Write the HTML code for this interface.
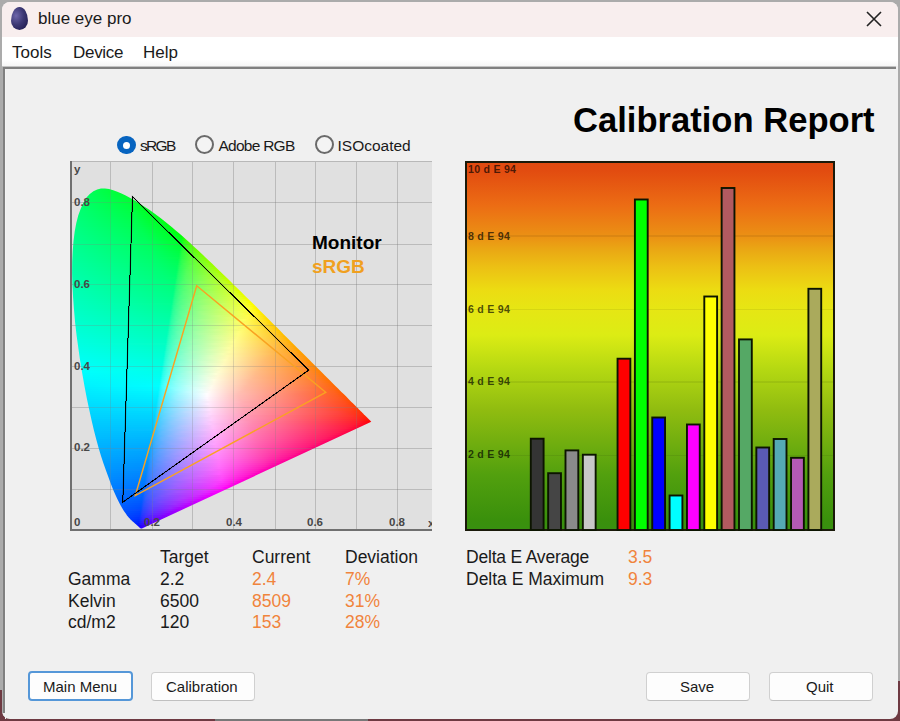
<!DOCTYPE html><html><head><meta charset="utf-8"><style>
*{margin:0;padding:0;box-sizing:border-box}
html,body{width:900px;height:721px;overflow:hidden;background:#ababab;font-family:"Liberation Sans",sans-serif}
.a{position:absolute}
.t{position:absolute;white-space:nowrap;line-height:1}
#win{position:absolute;left:2px;top:2px;width:896px;height:717px;background:#f0f0f0;border-radius:8px;overflow:hidden}
#field i{position:absolute;display:block;height:2px}
.btn{position:absolute;background:#fdfdfd;border:1px solid #d0d0d0;border-bottom-color:#c0c0c0;border-radius:4px}
</style></head><body>
<div class="a" style="left:0;top:690px;width:3px;height:31px;background:#6e3a42"></div><div class="a" style="left:895px;top:681px;width:5px;height:40px;background:#6e3a42"></div><div class="a" style="left:0;top:716px;width:900px;height:5px;background:linear-gradient(90deg,#6e3a42 0,#6e3a42 215px,#787878 215px,#787878 368px,#6e3a42 368px)"></div>
<div id="win"></div>

<div class="a" style="left:2px;top:2px;width:896px;height:35px;background:#f8eeee;border-radius:8px 8px 0 0"></div>
<div class="a" style="left:11px;top:7px;width:17px;height:23px;border-radius:50% 50% 50% 50%/60% 60% 40% 40%;background:radial-gradient(ellipse at 30% 38%,#6e66aa 0%,#3c3874 45%,#28245a 75%,#18163a 100%)"></div>
<div class="t" style="left:38px;top:10px;font-size:17px;color:#1a1a1a">blue eye pro</div>
<svg class="a" style="left:864px;top:9px" width="20" height="20"><path d="M3 3L17 17M17 3L3 17" stroke="#222" stroke-width="1.6"/></svg>
<div class="a" style="left:2px;top:37px;width:896px;height:29px;background:linear-gradient(180deg,#fff 0,#fff 23px,#f6f6f6 29px)"></div>
<div class="t" style="left:12px;top:43.5px;font-size:17px;color:#1a1a1a">Tools</div>
<div class="t" style="left:73px;top:43.5px;font-size:17px;color:#1a1a1a;letter-spacing:-0.3px">Device</div>
<div class="t" style="left:143px;top:43.5px;font-size:17px;color:#1a1a1a">Help</div>
<div class="a" style="left:2px;top:66px;width:894px;height:1px;background:#c4c4c4"></div>
<div class="a" style="left:3px;top:67px;width:893px;height:2px;background:#808080"></div>
<div class="a" style="left:3px;top:67px;width:2px;height:646px;background:#808080"></div>
<div class="a" style="left:2px;top:67px;width:1px;height:646px;background:#acacac"></div>
<div class="a" style="left:5px;top:69px;width:1px;height:650px;background:#f4f4f4"></div>
<div class="t" style="left:573px;top:102.5px;font-size:34.6px;font-weight:bold;color:#000">Calibration Report</div>
<div class="a" style="left:117.2px;top:135.7px;width:18.8px;height:18.8px;border-radius:50%;background:#0764c0"></div>
<div class="a" style="left:122.9px;top:141.5px;width:7.3px;height:7.3px;border-radius:50%;background:#fff"></div>
<div class="t" style="left:140px;top:138px;font-size:15.5px;color:#1a1a1a;letter-spacing:-1.7px">sRGB</div>
<div class="a" style="left:195px;top:135.4px;width:19px;height:19px;border-radius:50%;border:2px solid #6a6a6a;background:#f4f4f4"></div>
<div class="t" style="left:218.5px;top:138px;font-size:15.5px;color:#1a1a1a;letter-spacing:-0.75px">Adobe RGB</div>
<div class="a" style="left:315.3px;top:135.4px;width:19px;height:19px;border-radius:50%;border:2px solid #6a6a6a;background:#f4f4f4"></div>
<div class="t" style="left:337.5px;top:138px;font-size:15.5px;color:#1a1a1a;letter-spacing:0px">ISOcoated</div>
<div class="a" style="left:70px;top:161px;width:362px;height:370px;background:#e0e0e0"></div>
<div class="a" style="left:110px;top:161px;width:1px;height:368px;background:rgba(0,0,0,0.07)"></div>
<div class="a" style="left:152px;top:161px;width:1px;height:368px;background:rgba(0,0,0,0.07)"></div>
<div class="a" style="left:192px;top:161px;width:1px;height:368px;background:rgba(0,0,0,0.07)"></div>
<div class="a" style="left:233px;top:161px;width:1px;height:368px;background:rgba(0,0,0,0.07)"></div>
<div class="a" style="left:275px;top:161px;width:1px;height:368px;background:rgba(0,0,0,0.07)"></div>
<div class="a" style="left:315px;top:161px;width:1px;height:368px;background:rgba(0,0,0,0.07)"></div>
<div class="a" style="left:356px;top:161px;width:1px;height:368px;background:rgba(0,0,0,0.07)"></div>
<div class="a" style="left:397px;top:161px;width:1px;height:368px;background:rgba(0,0,0,0.07)"></div>
<div class="a" style="left:72px;top:489px;width:360px;height:1px;background:rgba(0,0,0,0.07)"></div>
<div class="a" style="left:72px;top:448px;width:360px;height:1px;background:rgba(0,0,0,0.07)"></div>
<div class="a" style="left:72px;top:407px;width:360px;height:1px;background:rgba(0,0,0,0.07)"></div>
<div class="a" style="left:72px;top:366px;width:360px;height:1px;background:rgba(0,0,0,0.07)"></div>
<div class="a" style="left:72px;top:325px;width:360px;height:1px;background:rgba(0,0,0,0.07)"></div>
<div class="a" style="left:72px;top:284px;width:360px;height:1px;background:rgba(0,0,0,0.07)"></div>
<div class="a" style="left:72px;top:244px;width:360px;height:1px;background:rgba(0,0,0,0.07)"></div>
<div class="a" style="left:72px;top:202px;width:360px;height:1px;background:rgba(0,0,0,0.07)"></div>
<div id="field"><div style="position:absolute;left:70px;top:161px;width:362px;height:370px;clip-path:polygon(71.9px 367.5px,71.9px 367.4px,71.8px 367.4px,71.8px 367.4px,71.8px 367.5px,71.8px 367.5px,71.8px 367.5px,71.8px 367.5px,71.7px 367.5px,71.7px 367.5px,71.7px 367.5px,71.7px 367.5px,71.7px 367.5px,71.6px 367.5px,71.6px 367.5px,71.6px 367.5px,71.5px 367.5px,71.5px 367.5px,71.5px 367.5px,71.4px 367.5px,71.4px 367.5px,71.4px 367.5px,71.3px 367.5px,71.3px 367.5px,71.2px 367.5px,71.2px 367.5px,71.2px 367.5px,71.1px 367.5px,71.0px 367.5px,71.0px 367.5px,70.9px 367.5px,70.8px 367.5px,70.8px 367.4px,70.7px 367.4px,70.5px 367.3px,70.4px 367.2px,70.3px 367.1px,70.2px 367.0px,70.0px 366.9px,69.9px 366.8px,69.7px 366.7px,69.5px 366.5px,69.3px 366.4px,69.1px 366.2px,68.9px 366.0px,68.7px 365.8px,68.4px 365.5px,68.2px 365.3px,67.9px 365.0px,67.6px 364.8px,67.3px 364.5px,66.9px 364.2px,66.5px 363.8px,66.1px 363.5px,65.7px 363.1px,65.2px 362.7px,64.7px 362.2px,64.2px 361.8px,63.6px 361.3px,63.0px 360.8px,62.4px 360.2px,61.7px 359.6px,61.0px 358.9px,60.3px 358.2px,59.5px 357.3px,58.7px 356.4px,57.9px 355.5px,57.0px 354.4px,56.1px 353.1px,55.0px 351.6px,53.9px 350.0px,52.7px 348.0px,51.4px 345.8px,50.0px 343.3px,48.6px 340.6px,47.1px 337.5px,45.5px 333.9px,43.7px 329.9px,41.9px 325.5px,40.0px 320.6px,38.0px 315.1px,35.8px 309.0px,33.5px 302.4px,31.1px 295.2px,28.7px 287.2px,26.3px 278.5px,23.9px 269.2px,21.5px 259.1px,19.2px 248.6px,16.8px 237.2px,14.5px 225.2px,12.3px 212.8px,10.2px 200.3px,8.4px 187.6px,6.6px 174.5px,5.1px 161.4px,4.0px 148.8px,3.1px 136.4px,2.4px 124.1px,2.1px 112.3px,2.2px 101.0px,2.7px 90.3px,3.5px 80.1px,4.7px 70.5px,6.3px 61.9px,8.3px 54.2px,10.8px 47.4px,13.5px 41.4px,16.5px 36.6px,19.8px 32.9px,23.4px 30.3px,27.2px 28.6px,31.0px 27.6px,35.0px 27.5px,39.0px 28.1px,43.2px 29.3px,47.3px 30.8px,51.5px 32.4px,55.7px 34.5px,59.8px 36.8px,63.9px 39.1px,67.9px 41.4px,71.8px 43.9px,75.7px 46.4px,79.6px 49.0px,83.4px 51.7px,87.1px 54.5px,90.8px 57.3px,94.6px 60.2px,98.3px 63.2px,102.0px 66.3px,105.7px 69.4px,109.4px 72.5px,113.1px 75.7px,116.7px 79.0px,120.4px 82.3px,124.0px 85.7px,127.7px 89.0px,131.4px 92.4px,135.0px 95.9px,138.7px 99.4px,142.3px 102.8px,146.0px 106.4px,149.7px 109.9px,153.3px 113.5px,157.0px 117.0px,160.6px 120.6px,164.2px 124.2px,167.9px 127.8px,171.5px 131.3px,175.1px 134.9px,178.8px 138.5px,182.4px 142.1px,186.0px 145.6px,189.5px 149.2px,193.1px 152.7px,196.6px 156.2px,200.1px 159.7px,203.5px 163.2px,207.0px 166.6px,210.4px 170.0px,213.7px 173.4px,217.1px 176.7px,220.3px 180.0px,223.6px 183.2px,226.8px 186.4px,229.9px 189.5px,233.0px 192.6px,236.0px 195.6px,239.0px 198.5px,241.9px 201.4px,244.7px 204.2px,247.4px 206.9px,250.0px 209.5px,252.5px 212.0px,254.9px 214.4px,257.2px 216.8px,259.5px 219.1px,261.7px 221.3px,263.9px 223.4px,265.9px 225.4px,267.8px 227.3px,269.7px 229.2px,271.4px 230.9px,273.1px 232.6px,274.7px 234.1px,276.2px 235.6px,277.6px 237.1px,279.0px 238.4px,280.2px 239.7px,281.4px 240.9px,282.6px 242.0px,283.6px 243.1px,284.6px 244.1px,285.6px 245.0px,286.5px 245.9px,287.4px 246.8px,288.2px 247.6px,288.9px 248.4px,289.6px 249.1px,290.3px 249.8px,291.0px 250.5px,291.7px 251.1px,292.3px 251.7px,292.8px 252.3px,293.4px 252.8px,293.9px 253.4px,294.4px 253.9px,294.9px 254.3px,295.3px 254.8px,295.8px 255.2px,296.2px 255.6px,296.5px 255.9px,296.9px 256.3px,297.1px 256.5px,297.4px 256.8px,297.8px 257.2px,298.1px 257.5px,298.6px 258.0px,299.0px 258.4px,299.4px 258.8px,299.8px 259.2px,300.2px 259.6px,300.5px 259.9px,300.8px 260.2px,301.0px 260.4px,301.1px 260.5px,301.2px 260.7px,301.3px 260.7px)">
<i style="top:26px;left:27px;width:15px;background:linear-gradient(90deg,#00ff4e 0px,#00ff3d 14px)"></i>
<i style="top:28px;left:22px;width:27px;background:linear-gradient(90deg,#00ff55 0px,#00ff36 26px)"></i>
<i style="top:30px;left:19px;width:35px;background:linear-gradient(90deg,#00ff59 0px,#00ff31 34px)"></i>
<i style="top:32px;left:16px;width:42px;background:linear-gradient(90deg,#00ff5e 0px,#00ff31 39px,#00ff2d 41px)"></i>
<i style="top:34px;left:15px;width:47px;background:linear-gradient(90deg,#00ff61 0px,#00ff33 41px,#00ff2a 46px)"></i>
<i style="top:36px;left:13px;width:53px;background:linear-gradient(90deg,#00ff64 0px,#00ff36 44px,#00ff25 52px)"></i>
<i style="top:38px;left:12px;width:57px;background:linear-gradient(90deg,#00ff67 0px,#00ff38 46px,#00ff23 56px)"></i>
<i style="top:40px;left:11px;width:61px;background:linear-gradient(90deg,#00ff69 0px,#00ff39 48px,#00ff20 60px)"></i>
<i style="top:42px;left:10px;width:66px;background:linear-gradient(90deg,#00ff6c 0px,#00ff3b 50px,#00ff19 65px)"></i>
<i style="top:44px;left:9px;width:70px;background:linear-gradient(90deg,#00ff6e 0px,#00ff3f 51px,#00ff1a 68px,#00ff15 69px)"></i>
<i style="top:46px;left:8px;width:74px;background:linear-gradient(90deg,#00ff70 0px,#00ff40 53px,#00ff1a 71px,#00ff11 73px)"></i>
<i style="top:48px;left:7px;width:77px;background:linear-gradient(90deg,#00ff73 0px,#00ff42 55px,#00ff1a 74px,#00ff11 76px)"></i>
<i style="top:50px;left:7px;width:80px;background:linear-gradient(90deg,#00ff75 0px,#00ff44 56px,#00ff1e 75px,#00ff0b 79px)"></i>
<i style="top:52px;left:6px;width:84px;background:linear-gradient(90deg,#00ff77 0px,#00ff46 58px,#00ff1e 78px,#00ff03 83px)"></i>
<i style="top:54px;left:5px;width:88px;background:linear-gradient(90deg,#00ff79 0px,#00ff47 60px,#00ff1f 81px,#00ff00 87px)"></i>
<i style="top:56px;left:5px;width:90px;background:linear-gradient(90deg,#00ff7b 0px,#00ff49 61px,#00ff1f 83px,#00ff00 89px)"></i>
<i style="top:58px;left:4px;width:94px;background:linear-gradient(90deg,#00ff7d 0px,#00ff4b 63px,#00ff23 85px,#00ff00 93px)"></i>
<i style="top:60px;left:4px;width:96px;background:linear-gradient(90deg,#00ff7f 0px,#00ff4c 64px,#00ff23 87px,#00ff00 95px)"></i>
<i style="top:62px;left:3px;width:100px;background:linear-gradient(90deg,#00ff81 0px,#00ff4f 65px,#00ff26 89px,#00ff0d 95px,#00ff00 98px,#00ff00 99px)"></i>
<i style="top:64px;left:3px;width:102px;background:linear-gradient(90deg,#00ff82 0px,#00ff4f 67px,#00ff26 91px,#00ff0e 97px,#00ff00 100px,#00ff00 101px)"></i>
<i style="top:66px;left:3px;width:105px;background:linear-gradient(90deg,#00ff84 0px,#00ff51 68px,#00ff27 93px,#00ff0e 99px,#00ff00 102px,#00ff00 104px)"></i>
<i style="top:68px;left:2px;width:108px;background:linear-gradient(90deg,#00ff86 0px,#00ff54 69px,#00ff2a 95px,#00ff0e 102px,#00ff00 105px,#00ff00 107px)"></i>
<i style="top:70px;left:2px;width:110px;background:linear-gradient(90deg,#00ff88 0px,#00ff55 70px,#00ff2a 97px,#00ff0f 104px,#00ff00 107px,#00ff00 109px)"></i>
<i style="top:72px;left:2px;width:113px;background:linear-gradient(90deg,#00ff89 0px,#00ff57 71px,#00ff2b 99px,#00ff0f 106px,#00ff00 108px,#00ff00 110px,#1cff00 112px)"></i>
<i style="top:74px;left:2px;width:115px;background:linear-gradient(90deg,#00ff8b 0px,#00ff57 73px,#00ff2b 101px,#00ff0f 108px,#00ff00 110px,#29ff00 113px,#30ff00 114px)"></i>
<i style="top:76px;left:1px;width:118px;background:linear-gradient(90deg,#00ff8d 0px,#00ff5a 74px,#00ff2e 103px,#03ff10 111px,#23ff00 113px,#3eff00 117px)"></i>
<i style="top:78px;left:1px;width:120px;background:linear-gradient(90deg,#00ff8e 0px,#00ff5b 75px,#00ff2e 105px,#00ff1f 110px,#2eff08 114px,#3bff00 116px,#4aff00 119px)"></i>
<i style="top:80px;left:1px;width:123px;background:linear-gradient(90deg,#00ff90 0px,#00ff5d 76px,#00ff31 106px,#00ff26 110px,#29ff1b 113px,#42ff00 117px,#57ff00 122px)"></i>
<i style="top:82px;left:1px;width:125px;background:linear-gradient(90deg,#00ff92 0px,#00ff5f 77px,#00ff31 108px,#00ff2c 110px,#22ff26 112px,#48ff09 118px,#51ff00 120px,#5fff00 124px)"></i>
<i style="top:84px;left:1px;width:127px;background:linear-gradient(90deg,#00ff93 0px,#00ff60 78px,#00ff34 109px,#2eff2a 113px,#52ff09 120px,#5aff00 122px,#67ff00 126px)"></i>
<i style="top:86px;left:0px;width:130px;background:linear-gradient(90deg,#00ff95 0px,#00ff62 80px,#00ff39 110px,#28ff32 113px,#58ff12 122px,#5fff00 124px,#6eff00 129px)"></i>
<i style="top:88px;left:0px;width:132px;background:linear-gradient(90deg,#00ff97 0px,#00ff63 81px,#00ff3d 110px,#22ff39 112px,#4dff28 119px,#63ff0a 125px,#6aff00 127px,#75ff00 131px)"></i>
<i style="top:90px;left:0px;width:134px;background:linear-gradient(90deg,#00ff98 0px,#00ff65 82px,#00ff43 109px,#06ff41 110px,#25ff3d 112px,#53ff2b 120px,#6bff0b 127px,#71ff00 129px,#7cff00 133px)"></i>
<i style="top:92px;left:0px;width:137px;background:linear-gradient(90deg,#00ff9a 0px,#00ff66 83px,#00ff47 109px,#28ff42 112px,#58ff2e 121px,#6fff13 128px,#75ff01 130px,#84ff00 136px)"></i>
<i style="top:94px;left:0px;width:139px;background:linear-gradient(90deg,#00ff9b 0px,#00ff68 84px,#00ff4a 109px,#21ff47 111px,#4eff3a 118px,#73ff19 129px,#7eff00 133px,#8aff00 138px)"></i>
<i style="top:96px;left:0px;width:141px;background:linear-gradient(90deg,#00ff9d 0px,#00ff69 85px,#03ff4e 109px,#24ff4b 111px,#53ff3d 119px,#7aff19 131px,#84ff00 135px,#90ff00 140px)"></i>
<i style="top:98px;left:0px;width:143px;background:linear-gradient(90deg,#00ff9e 0px,#00ff6b 86px,#00ff52 108px,#30ff4d 112px,#64ff39 123px,#83ff14 134px,#8aff00 137px,#96ff00 142px)"></i>
<i style="top:100px;left:0px;width:145px;background:linear-gradient(90deg,#00ffa0 0px,#00ff6c 87px,#00ff56 108px,#2aff52 111px,#5aff43 120px,#84ff1f 134px,#90ff00 139px,#9bff00 144px)"></i>
<i style="top:102px;left:0px;width:147px;background:linear-gradient(90deg,#00ffa2 0px,#00ff6f 87px,#01ff59 108px,#18ff57 109px,#41ff51 114px,#78ff35 129px,#8fff15 138px,#96ff00 141px,#a1ff00 146px)"></i>
<i style="top:104px;left:0px;width:149px;background:linear-gradient(90deg,#00ffa3 0px,#00ff70 88px,#00ff5d 107px,#30ff58 111px,#61ff4a 121px,#90ff20 138px,#9bff00 143px,#a6ff00 148px)"></i>
<i style="top:106px;left:0px;width:151px;background:linear-gradient(90deg,#00ffa5 0px,#00ff72 89px,#00ff60 107px,#2aff5c 110px,#5bff50 119px,#92ff28 138px,#9dff0e 143px,#a1ff00 145px,#abff00 150px)"></i>
<i style="top:108px;left:0px;width:153px;background:linear-gradient(90deg,#00ffa6 0px,#00ff73 90px,#00ff63 107px,#23ff60 109px,#50ff58 116px,#8eff34 136px,#a0ff16 144px,#a6ff00 147px,#b0ff00 152px)"></i>
<i style="top:110px;left:0px;width:155px;background:linear-gradient(90deg,#00ffa8 0px,#00ff75 91px,#00ff66 106px,#07ff65 107px,#27ff63 109px,#56ff5a 117px,#96ff32 139px,#a8ff0f 147px,#acff00 149px,#b5ff00 154px)"></i>
<i style="top:112px;left:0px;width:157px;background:linear-gradient(90deg,#00ffa9 0px,#00ff76 92px,#00ff69 106px,#2aff66 109px,#58ff5d 117px,#9aff35 140px,#abff17 148px,#b1ff00 151px,#baff00 156px)"></i>
<i style="top:114px;left:0px;width:159px;background:linear-gradient(90deg,#00ffab 0px,#00ff78 93px,#00ff6c 106px,#23ff6a 108px,#51ff62 115px,#90ff45 135px,#aeff1d 149px,#b6ff00 153px,#bfff00 158px)"></i>
<i style="top:116px;left:0px;width:161px;background:linear-gradient(90deg,#00ffad 0px,#00ff79 94px,#04ff6e 106px,#26ff6d 108px,#52ff65 115px,#91ff49 135px,#b1ff22 150px,#bbff00 155px,#c4ff00 160px)"></i>
<i style="top:118px;left:0px;width:163px;background:linear-gradient(90deg,#00ffae 0px,#00ff7b 95px,#00ff72 105px,#29ff6f 108px,#58ff67 116px,#9cff46 139px,#b9ff1e 153px,#c0ff00 157px,#c9ff00 162px)"></i>
<i style="top:120px;left:0px;width:166px;background:linear-gradient(90deg,#00ffb0 0px,#00ff7c 96px,#00ff75 105px,#22ff73 107px,#4cff6d 113px,#8aff57 131px,#b8ff2b 152px,#c1ff12 157px,#c5ff00 159px,#d0ff00 165px)"></i>
<i style="top:122px;left:0px;width:168px;background:linear-gradient(90deg,#00ffb1 0px,#00ff7f 96px,#01ff77 105px,#19ff76 106px,#3eff73 110px,#74ff65 123px,#b5ff37 150px,#c7ff12 159px,#caff00 161px,#d5ff00 167px)"></i>
<i style="top:124px;left:0px;width:170px;background:linear-gradient(90deg,#00ffb3 0px,#00ff80 97px,#00ff7a 104px,#32ff77 108px,#65ff6d 118px,#acff48 145px,#c8ff1f 159px,#cfff00 163px,#daff00 169px)"></i>
<i style="top:126px;left:0px;width:172px;background:linear-gradient(90deg,#00ffb4 0px,#00ff82 98px,#00ff7d 104px,#2cff7a 107px,#5bff73 115px,#9eff58 138px,#c7ff2c 158px,#d1ff13 163px,#d4ff00 165px,#dfff00 171px)"></i>
<i style="top:128px;left:0px;width:174px;background:linear-gradient(90deg,#00ffb6 0px,#00ff83 99px,#00ff7f 104px,#18ff7f 105px,#3eff7b 109px,#75ff6f 122px,#c1ff3e 154px,#d4ff1b 164px,#d9ff00 167px,#e3ff00 173px)"></i>
<i style="top:130px;left:0px;width:176px;background:linear-gradient(90deg,#00ffb8 0px,#00ff85 100px,#00ff83 103px,#08ff82 104px,#29ff80 106px,#55ff7a 113px,#95ff65 133px,#ccff37 159px,#dbff14 167px,#deff00 169px,#e8ff00 175px)"></i>
<i style="top:132px;left:0px;width:178px;background:linear-gradient(90deg,#00ffb9 0px,#00ff87 101px,#00ff85 103px,#2cff83 106px,#5bff7c 114px,#9eff65 136px,#d1ff37 161px,#e0ff15 169px,#e3ff00 171px,#edff00 177px)"></i>
<i style="top:134px;left:0px;width:180px;background:linear-gradient(90deg,#00ffbb 0px,#00ff88 102px,#00ff87 103px,#25ff86 105px,#4fff81 111px,#8eff70 129px,#d1ff40 160px,#e3ff1c 170px,#e8ff00 173px,#f2ff00 179px)"></i>
<i style="top:136px;left:1px;width:181px;background:linear-gradient(90deg,#00ffbc 0px,#00ff8b 101px,#05ff8a 102px,#1cff89 103px,#46ff85 108px,#81ff78 123px,#d1ff47 158px,#e6ff22 170px,#edff00 174px,#f7ff00 180px)"></i>
<i style="top:138px;left:1px;width:183px;background:linear-gradient(90deg,#00ffbe 0px,#00ff8d 101px,#2cff8b 104px,#5cff84 112px,#a0ff6f 134px,#ddff3f 164px,#edff1d 173px,#f2ff00 176px,#fcff00 182px)"></i>
<i style="top:140px;left:1px;width:185px;background:linear-gradient(90deg,#00ffc0 0px,#00ff8f 101px,#24ff8e 103px,#50ff89 109px,#8fff7a 127px,#dbff49 162px,#f0ff23 174px,#f5ff0d 177px,#f7ff00 178px,#fffd00 184px)"></i>
<i style="top:142px;left:1px;width:187px;background:linear-gradient(90deg,#00ffc1 0px,#02ff92 101px,#1bff91 102px,#41ff8e 106px,#79ff84 119px,#c9ff5f 152px,#f0ff30 173px,#fbff0e 179px,#fcff00 180px,#fff800 186px)"></i>
<i style="top:144px;left:1px;width:189px;background:linear-gradient(90deg,#00ffc3 0px,#00ff95 100px,#2bff93 103px,#5dff8d 111px,#a2ff79 133px,#e7ff48 167px,#fcff1f 179px,#fffd00 182px,#fff300 188px)"></i>
<i style="top:146px;left:1px;width:191px;background:linear-gradient(90deg,#00ffc4 0px,#00ff97 100px,#2fff95 103px,#5fff8f 111px,#a3ff7c 133px,#ebff4b 168px,#fffe25 180px,#fff801 184px,#ffee00 190px)"></i>
<i style="top:148px;left:1px;width:193px;background:linear-gradient(90deg,#00ffc6 0px,#00ff99 100px,#1aff99 101px,#41ff96 105px,#7bff8c 118px,#ccff6b 151px,#fbff3c 176px,#fff618 184px,#fff301 186px,#ffea00 192px)"></i>
<i style="top:150px;left:2px;width:194px;background:linear-gradient(90deg,#00ffc8 0px,#00ff9c 98px,#0aff9c 99px,#2bff9a 101px,#59ff96 108px,#9cff86 128px,#eeff54 167px,#fff931 180px,#fff00f 186px,#ffee02 187px,#ffe600 193px)"></i>
<i style="top:152px;left:2px;width:196px;background:linear-gradient(90deg,#00ffc9 0px,#00ff9f 98px,#2eff9d 101px,#60ff97 109px,#a5ff86 131px,#f5ff53 170px,#fff431 182px,#ffeb0f 188px,#ffea02 189px,#ffe100 195px)"></i>
<i style="top:154px;left:2px;width:198px;background:linear-gradient(90deg,#00ffcb 0px,#00ffa1 98px,#19ffa0 99px,#41ff9e 103px,#79ff96 115px,#c9ff7a 146px,#fffc4a 176px,#ffe91e 188px,#ffe400 192px,#ffdd00 197px)"></i>
<i style="top:156px;left:2px;width:200px;background:linear-gradient(90deg,#00ffcd 0px,#00ffa4 97px,#07ffa3 98px,#1effa3 99px,#4affa0 104px,#87ff95 119px,#deff71 156px,#fffa4f 176px,#ffe51d 190px,#ffdf00 194px,#ffd900 199px)"></i>
<i style="top:158px;left:2px;width:202px;background:linear-gradient(90deg,#00ffce 0px,#00ffa6 97px,#2effa5 100px,#61ff9f 108px,#a5ff90 129px,#feff5d 172px,#ffe222 191px,#ffdb00 196px,#ffd500 201px)"></i>
<i style="top:160px;left:3px;width:203px;background:linear-gradient(90deg,#00ffd0 0px,#00ffa9 96px,#27ffa7 98px,#54ffa4 104px,#93ff98 121px,#f3ff6d 164px,#fff757 175px,#ffdd22 192px,#ffd700 197px,#ffd100 202px)"></i>
<i style="top:162px;left:3px;width:205px;background:linear-gradient(90deg,#00ffd2 0px,#03ffab 96px,#1dffaa 97px,#44ffa8 101px,#7fffa0 114px,#d3ff85 147px,#fffa62 172px,#ffda26 193px,#ffd300 199px,#ffcd00 204px)"></i>
<i style="top:164px;left:3px;width:207px;background:linear-gradient(90deg,#00ffd3 0px,#00ffae 95px,#2effac 98px,#5dffa8 105px,#a1ff9b 125px,#fffe6d 169px,#ffd626 195px,#ffcf00 201px,#ffc900 206px)"></i>
<i style="top:166px;left:3px;width:209px;background:linear-gradient(90deg,#00ffd5 0px,#00ffb0 95px,#26ffaf 97px,#54ffac 103px,#95ffa1 120px,#f5ff7a 162px,#fff566 173px,#ffd225 197px,#ffcb00 203px,#ffc600 208px)"></i>
<i style="top:168px;left:3px;width:211px;background:linear-gradient(90deg,#00ffd7 0px,#00ffb3 95px,#1cffb2 96px,#44ffb0 100px,#7dffa9 112px,#d0ff92 143px,#fffa72 169px,#ffcf29 198px,#ffca0f 203px,#ffc700 205px,#ffc200 210px)"></i>
<i style="top:170px;left:4px;width:212px;background:linear-gradient(90deg,#00ffd8 0px,#00ffb6 93px,#0bffb5 94px,#2effb4 96px,#5effb0 103px,#a1ffa4 122px,#fffe7c 165px,#ffcb29 199px,#ffc60f 204px,#ffc400 206px,#ffbe00 211px)"></i>
<i style="top:172px;left:4px;width:214px;background:linear-gradient(90deg,#00ffda 0px,#00ffb8 93px,#31ffb6 96px,#64ffb2 104px,#abffa5 125px,#fffe81 164px,#ffc92c 200px,#ffc20f 206px,#ffc000 208px,#ffbb00 213px)"></i>
<i style="top:174px;left:4px;width:216px;background:linear-gradient(90deg,#00ffdc 0px,#00ffba 93px,#1bffba 94px,#45ffb8 98px,#7fffb1 110px,#d3ff9b 141px,#fffc83 164px,#ffc52b 202px,#ffbe0f 208px,#ffbc00 210px,#ffb700 215px)"></i>
<i style="top:176px;left:4px;width:218px;background:linear-gradient(90deg,#00ffde 0px,#00ffbd 92px,#08ffbd 93px,#20ffbc 94px,#47ffba 98px,#84ffb3 111px,#d9ff9d 143px,#fffb88 163px,#ffc12b 204px,#ffbb0f 210px,#ffb900 212px,#ffb400 217px)"></i>
<i style="top:178px;left:5px;width:219px;background:linear-gradient(90deg,#00ffe0 0px,#00ffc0 91px,#31ffbe 94px,#61ffbb 101px,#a5ffb0 120px,#fffd8e 160px,#ffbe2e 204px,#ffb70f 211px,#ffb500 213px,#ffb000 218px)"></i>
<i style="top:180px;left:5px;width:221px;background:linear-gradient(90deg,#00ffe1 0px,#00ffc2 91px,#29ffc1 93px,#58ffbe 99px,#9bffb5 116px,#ffff95 158px,#ffbf39 202px,#ffb416 212px,#ffb200 215px,#ffad00 220px)"></i>
<i style="top:182px;left:5px;width:223px;background:linear-gradient(90deg,#00ffe3 0px,#04ffc4 91px,#1fffc4 92px,#48ffc2 96px,#82ffbc 108px,#d8ffa8 139px,#fffb95 159px,#ffbc3b 203px,#ffb116 214px,#ffae00 217px,#ffaa00 222px)"></i>
<i style="top:184px;left:5px;width:225px;background:linear-gradient(90deg,#00ffe5 0px,#00ffc7 90px,#31ffc6 93px,#62ffc3 100px,#a7ffb8 119px,#fffd9b 157px,#ffbe46 200px,#ffae1b 215px,#ffab00 219px,#ffa600 224px)"></i>
<i style="top:186px;left:6px;width:226px;background:linear-gradient(90deg,#00ffe7 0px,#00ffca 89px,#29ffc9 91px,#59ffc6 97px,#9affbe 113px,#fdffa3 153px,#ffbb47 200px,#ffab1a 216px,#ffa700 220px,#ffa300 225px)"></i>
<i style="top:188px;left:6px;width:228px;background:linear-gradient(90deg,#00ffe9 0px,#01ffcc 89px,#1effcc 90px,#48ffca 94px,#84ffc4 106px,#d9ffb3 136px,#fffba1 155px,#ffbb4f 198px,#ffa81e 217px,#ffa400 222px,#ffa000 227px)"></i>
<i style="top:190px;left:6px;width:230px;background:linear-gradient(90deg,#00ffeb 0px,#00ffcf 88px,#31ffce 91px,#63ffcb 98px,#aaffc1 117px,#fffda8 153px,#ffbd57 195px,#ffa51e 219px,#ffa100 224px,#ff9c00 229px)"></i>
<i style="top:192px;left:7px;width:231px;background:linear-gradient(90deg,#00ffed 0px,#00ffd2 87px,#28ffd1 89px,#54ffcf 94px,#96ffc8 109px,#f6ffb1 146px,#fff5a3 155px,#ffb54f 200px,#ffa21e 220px,#ff9d00 225px,#ff9900 230px)"></i>
<i style="top:194px;left:7px;width:233px;background:linear-gradient(90deg,#00ffef 0px,#00ffd4 87px,#1dffd4 88px,#49ffd2 92px,#86ffcd 104px,#ddffbd 134px,#fffbae 151px,#ffbb5f 193px,#ff9f22 221px,#ff9900 228px,#ff9600 232px)"></i>
<i style="top:196px;left:7px;width:235px;background:linear-gradient(90deg,#00fff1 0px,#00ffd7 86px,#0affd7 87px,#23ffd6 88px,#4cffd5 92px,#88ffd0 104px,#dfffc0 134px,#fffab2 150px,#ffbb65 191px,#ff9d25 222px,#ff9808 228px,#ff9600 230px,#ff9300 234px)"></i>
<i style="top:198px;left:7px;width:237px;background:linear-gradient(90deg,#00fff3 0px,#00ffda 86px,#34ffd9 89px,#66ffd6 96px,#aeffcd 115px,#fffdb8 148px,#ffbd6c 188px,#ff9a27 223px,#ff9408 230px,#ff9300 232px,#ff9000 236px)"></i>
<i style="top:200px;left:8px;width:238px;background:linear-gradient(90deg,#00fff4 0px,#00ffdc 85px,#1cffdc 86px,#41ffdb 89px,#7bffd7 99px,#ccffcb 124px,#fffab9 147px,#ffbb6e 187px,#ff9727 224px,#ff9108 231px,#ff8f00 233px,#ff8c00 237px)"></i>
<i style="top:202px;left:8px;width:240px;background:linear-gradient(90deg,#00fff6 0px,#00ffdf 84px,#06ffdf 85px,#22ffdf 86px,#4cffdd 90px,#8affd8 102px,#e3ffca 132px,#fffabd 146px,#ffbb72 186px,#ff9327 226px,#ff8e08 233px,#ff8c00 235px,#ff8900 239px)"></i>
<i style="top:204px;left:8px;width:242px;background:linear-gradient(90deg,#00fff9 0px,#00ffe2 84px,#34ffe1 87px,#68ffde 94px,#b1ffd6 113px,#fffcc4 144px,#ffbc79 183px,#ff9129 227px,#ff8b08 235px,#ff8800 238px,#ff8600 241px)"></i>
<i style="top:206px;left:9px;width:243px;background:linear-gradient(90deg,#00fffa 0px,#00ffe5 83px,#2cffe4 85px,#58ffe2 90px,#99ffdd 104px,#fbffcc 139px,#ffb776 185px,#ff8e29 228px,#ff8709 236px,#ff8500 239px,#ff8300 242px)"></i>
<i style="top:208px;left:9px;width:245px;background:linear-gradient(90deg,#00fffd 0px,#02ffe8 83px,#21ffe7 84px,#4dffe6 88px,#8cffe1 100px,#e7ffd4 130px,#fffac9 142px,#ffba7e 181px,#ff8a29 230px,#ff8409 238px,#ff8200 241px,#ff8000 244px)"></i>
<i style="top:210px;left:9px;width:247px;background:linear-gradient(90deg,#00ffff 0px,#00ffeb 82px,#34ffea 85px,#69ffe7 92px,#b1ffe0 110px,#fffccf 140px,#ffbd87 177px,#ff882b 231px,#ff8109 240px,#ff7f00 243px,#ff7c00 246px)"></i>
<i style="top:212px;left:10px;width:248px;background:linear-gradient(90deg,#00fdff 0px,#00ffed 81px,#2bffed 83px,#59ffeb 88px,#9bffe6 102px,#fdffd7 136px,#ffbb88 176px,#ff842b 232px,#ff7e09 241px,#ff7b00 244px,#ff7900 247px)"></i>
<i style="top:214px;left:10px;width:250px;background:linear-gradient(90deg,#00fbff 0px,#00fff0 81px,#20fff0 82px,#4effef 86px,#8affeb 97px,#e4ffe0 125px,#fff9d4 138px,#ffba8c 175px,#ff812b 234px,#ff7a09 243px,#ff7700 247px,#ff7600 249px)"></i>
<i style="top:216px;left:10px;width:252px;background:linear-gradient(90deg,#00f9ff 0px,#00fff3 80px,#0cfff3 81px,#26fff3 82px,#51fff2 86px,#90ffee 98px,#eeffe2 128px,#fff9d8 137px,#ffb98f 174px,#ff7e2a 236px,#ff7709 245px,#ff7400 249px,#ff7300 251px)"></i>
<i style="top:218px;left:11px;width:253px;background:linear-gradient(90deg,#00f7ff 0px,#00fff6 79px,#2bfff6 81px,#5bfff4 86px,#9efff0 100px,#fffee2 133px,#ffbe99 168px,#ff7a2a 237px,#ff7409 246px,#ff7100 250px,#ff7000 252px)"></i>
<i style="top:220px;left:11px;width:255px;background:linear-gradient(90deg,#00f5ff 0px,#00fff9 79px,#1efff9 80px,#46fff8 83px,#7ffff5 92px,#d1ffed 115px,#fffbe3 133px,#ffbc9a 168px,#ff792e 237px,#ff710a 248px,#ff6e00 252px,#ff6c00 254px)"></i>
<i style="top:222px;left:11px;width:257px;background:linear-gradient(90deg,#00f3ff 0px,#00fffc 78px,#08fffc 79px,#25fffc 80px,#52fffb 84px,#8efff8 95px,#ebffee 123px,#fff9e4 133px,#ffba9c 168px,#ff7630 238px,#ff6e10 249px,#ff6c00 252px,#ff6900 256px)"></i>
<i style="top:224px;left:12px;width:258px;background:linear-gradient(90deg,#00f1ff 0px,#00ffff 77px,#38ffff 80px,#6ffffd 87px,#bafff7 105px,#fffbeb 130px,#ffbca2 164px,#ff793f 231px,#ff6b14 249px,#ff6800 253px,#ff6600 257px)"></i>
<i style="top:226px;left:12px;width:260px;background:linear-gradient(90deg,#00eeff 0px,#00fcff 77px,#1dfcff 78px,#46fdff 81px,#81ffff 90px,#d6fff8 113px,#fffbef 129px,#ffbba5 163px,#ff7743 230px,#ff6918 250px,#ff6400 256px,#ff6200 259px)"></i>
<i style="top:228px;left:13px;width:261px;background:linear-gradient(90deg,#00ecff 0px,#03f9ff 76px,#23f9ff 77px,#51faff 81px,#94fdff 93px,#eafffa 118px,#fff8f0 128px,#ffb9a7 162px,#ff7545 230px,#ff6518 251px,#ff6100 257px,#ff5f00 260px)"></i>
<i style="top:230px;left:13px;width:263px;background:linear-gradient(90deg,#00eaff 0px,#00f6ff 75px,#36f6ff 78px,#6df8ff 85px,#bffcff 104px,#fffbf7 126px,#ffbdaf 158px,#ff7953 222px,#ff631e 251px,#ff5d00 259px,#ff5b00 262px)"></i>
<i style="top:232px;left:13px;width:265px;background:linear-gradient(90deg,#00e8ff 0px,#00f3ff 75px,#2cf3ff 77px,#5bf4ff 82px,#a1f7ff 96px,#fffdfe 124px,#ffbfb6 155px,#ff7c5d 216px,#ff6021 252px,#ff5a00 261px,#ff5700 264px)"></i>
<i style="top:234px;left:14px;width:266px;background:linear-gradient(90deg,#00e6ff 0px,#00f0ff 74px,#20f0ff 75px,#4ef1ff 79px,#91f3ff 91px,#fffbff 123px,#ffbcb7 154px,#ff795e 216px,#ff5c21 253px,#ff5600 262px,#ff5400 265px)"></i>
<i style="top:236px;left:14px;width:268px;background:linear-gradient(90deg,#00e4ff 0px,#00edff 73px,#0dedff 74px,#25edff 75px,#50eeff 79px,#91f0ff 91px,#fef7ff 123px,#ffb9b6 155px,#ff755c 219px,#ff5921 255px,#ff5200 264px,#ff5000 267px)"></i>
<i style="top:238px;left:14px;width:270px;background:linear-gradient(90deg,#00e2ff 0px,#00eaff 73px,#2aeaff 75px,#59ebff 80px,#9eedff 94px,#fff2fd 124px,#ffb5b6 156px,#ff6f59 223px,#ff5521 257px,#ff4e00 266px,#ff4c00 269px)"></i>
<i style="top:240px;left:15px;width:271px;background:linear-gradient(90deg,#00e0ff 0px,#00e7ff 72px,#1ee7ff 73px,#44e8ff 76px,#80e9ff 86px,#e4eeff 114px,#ffeaf9 125px,#ffadb0 159px,#ff654d 232px,#ff4f1b 260px,#ff4a00 267px,#ff4800 270px)"></i>
<i style="top:242px;left:15px;width:273px;background:linear-gradient(90deg,#00deff 0px,#00e4ff 71px,#08e4ff 72px,#23e4ff 73px,#4ee5ff 77px,#8ee6ff 89px,#ffecff 123px,#ffafb7 156px,#ff6757 226px,#ff4d20 260px,#ff4600 269px,#ff4300 272px)"></i>
<i style="top:244px;left:16px;width:274px;background:linear-gradient(90deg,#00dcff 0px,#00e1ff 70px,#35e2ff 73px,#69e2ff 80px,#bae5ff 100px,#ffe5fa 124px,#ffa8b3 158px,#ff5d4c 235px,#ff471b 263px,#ff4100 270px,#ff3f00 273px)"></i>
<i style="top:246px;left:16px;width:276px;background:linear-gradient(90deg,#00daff 0px,#00deff 70px,#2cdfff 72px,#5fdfff 78px,#a9e1ff 95px,#ffe2fb 124px,#ffa6b4 158px,#ff594c 237px,#ff421a 265px,#ff3c00 272px,#ff3a00 275px)"></i>
<i style="top:248px;left:17px;width:277px;background:linear-gradient(90deg,#00d8ff 0px,#03dcff 69px,#21dcff 70px,#4cdcff 74px,#8bddff 86px,#ffe1ff 122px,#ffa5b7 156px,#ff574f 235px,#ff3e1d 265px,#ff3700 273px,#ff3400 276px)"></i>
<i style="top:250px;left:17px;width:279px;background:linear-gradient(90deg,#00d6ff 0px,#00d9ff 68px,#33d9ff 71px,#67daff 78px,#b7dbff 98px,#ffdafa 124px,#ff9fb3 159px,#ff473c 251px,#ff3614 270px,#ff3100 275px,#ff2e00 278px)"></i>
<i style="top:252px;left:17px;width:281px;background:linear-gradient(90deg,#00d4ff 0px,#00d6ff 68px,#2ad6ff 70px,#56d7ff 75px,#9bd7ff 90px,#ffd9fe 123px,#ff9eb6 158px,#ff423b 253px,#ff3114 272px,#ff2b00 277px,#ff2800 280px)"></i>
<i style="top:254px;left:18px;width:282px;background:linear-gradient(90deg,#00d2ff 0px,#00d3ff 67px,#1ed3ff 68px,#4ad4ff 72px,#89d4ff 84px,#f7d6ff 119px,#ffcdf4 126px,#ff92ac 164px,#ff342a 264px,#ff280b 275px,#ff2400 278px,#ff2000 281px)"></i>
<i style="top:256px;left:18px;width:284px;background:linear-gradient(90deg,#00d0ff 0px,#00d1ff 66px,#0cd1ff 67px,#31d1ff 69px,#65d1ff 76px,#b3d1ff 96px,#ffcffa 124px,#ff94b2 161px,#ff2c28 267px,#ff1e06 278px,#ff1600 283px)"></i>
<i style="top:258px;left:19px;width:285px;background:linear-gradient(90deg,#00cdff 0px,#00ceff 65px,#28ceff 67px,#54ceff 72px,#98ceff 87px,#ffcefe 122px,#ff93b6 158px,#ff2528 268px,#ff1306 279px,#ff0500 284px)"></i>
<i style="top:260px;left:19px;width:285px;background:linear-gradient(90deg,#00cbff 0px,#00cbff 65px,#1ccbff 66px,#48cbff 70px,#86cbff 82px,#f2cbff 117px,#ffc5f7 125px,#ff8aae 164px,#ff1e2a 269px,#ff040b 280px,#ff0000 283px,#ff0000 284px)"></i>
<i style="top:262px;left:20px;width:282px;background:linear-gradient(90deg,#00c9ff 0px,#00c9ff 63px,#08c9ff 64px,#21c9ff 65px,#4ac8ff 69px,#8ac8ff 82px,#fcc7ff 120px,#ff87af 163px,#ff1c32 265px,#ff0017 278px,#ff000b 281px)"></i>
<i style="top:264px;left:20px;width:278px;background:linear-gradient(90deg,#00c7ff 0px,#00c6ff 63px,#32c6ff 66px,#64c6ff 73px,#b0c5ff 93px,#ffc1fb 123px,#ff87b3 161px,#ff1b3b 261px,#ff0027 273px,#ff001f 277px)"></i>
<i style="top:266px;left:21px;width:272px;background:linear-gradient(90deg,#00c5ff 0px,#00c3ff 62px,#2ac3ff 64px,#5ac3ff 70px,#a0c2ff 87px,#ffbefc 122px,#ff84b4 160px,#ff1d44 255px,#ff0032 268px,#ff002d 271px)"></i>
<i style="top:268px;left:21px;width:268px;background:linear-gradient(90deg,#00c3ff 0px,#04c1ff 62px,#1fc0ff 63px,#48c0ff 67px,#84c0ff 79px,#edbdff 114px,#ffb9fa 123px,#ff7fb2 162px,#ff1c4b 251px,#ff003a 264px,#ff0036 267px)"></i>
<i style="top:270px;left:22px;width:263px;background:linear-gradient(90deg,#00c1ff 0px,#00beff 60px,#30beff 63px,#62bdff 70px,#adbcff 90px,#ffb6fb 122px,#ff7cb3 161px,#ff1c51 246px,#ff0043 258px,#ff003e 262px)"></i>
<i style="top:272px;left:22px;width:259px;background:linear-gradient(90deg,#00bfff 0px,#00bbff 60px,#28bbff 62px,#58bbff 68px,#9db9ff 85px,#ffb2fc 122px,#ff79b4 161px,#ff1c57 242px,#ff004a 254px,#ff0045 258px)"></i>
<i style="top:274px;left:23px;width:253px;background:linear-gradient(90deg,#00bdff 0px,#00b9ff 59px,#1db8ff 60px,#46b8ff 64px,#82b7ff 76px,#e8b3ff 111px,#ffadfa 122px,#ff74b3 162px,#ff1d5e 236px,#ff0051 248px,#ff004d 252px)"></i>
<i style="top:276px;left:23px;width:249px;background:linear-gradient(90deg,#00bbff 0px,#00b6ff 58px,#0cb6ff 59px,#2eb6ff 61px,#60b5ff 68px,#aab3ff 88px,#ffaafb 122px,#ff71b4 162px,#ff1d64 232px,#ff0057 244px,#ff0053 248px)"></i>
<i style="top:278px;left:24px;width:244px;background:linear-gradient(90deg,#00b8ff 0px,#00b3ff 57px,#31b3ff 60px,#66b2ff 68px,#b2afff 90px,#ffa7fc 121px,#ff6db3 162px,#ff1c6a 227px,#ff005e 238px,#ff0059 243px)"></i>
<i style="top:280px;left:24px;width:239px;background:linear-gradient(90deg,#00b6ff 0px,#00b1ff 57px,#1ab1ff 58px,#45b0ff 62px,#7faeff 74px,#e2a8ff 108px,#ffa2fa 122px,#ff67b2 164px,#ff1c6f 223px,#ff0065 233px,#ff0060 238px)"></i>
<i style="top:282px;left:25px;width:234px;background:linear-gradient(90deg,#00b4ff 0px,#00aeff 55px,#08aeff 56px,#20aeff 57px,#4dadff 62px,#8eabff 77px,#fea2ff 119px,#ff66b5 161px,#ff1b74 218px,#ff006a 228px,#ff0065 233px)"></i>
<i style="top:284px;left:25px;width:230px;background:linear-gradient(90deg,#00b2ff 0px,#00abff 55px,#30abff 58px,#64aaff 66px,#b0a6ff 88px,#ff9bfc 121px,#ff60b3 163px,#ff1b7a 214px,#ff0071 223px,#ff006b 229px)"></i>
<i style="top:286px;left:26px;width:224px;background:linear-gradient(90deg,#00b0ff 0px,#00a9ff 54px,#28a8ff 56px,#56a7ff 62px,#9ba4ff 80px,#ff98fc 120px,#ff5cb4 162px,#ff1a7f 209px,#ff0076 218px,#ff0071 223px)"></i>
<i style="top:288px;left:26px;width:220px;background:linear-gradient(90deg,#00aeff 0px,#04a6ff 54px,#1da6ff 55px,#45a5ff 59px,#81a3ff 72px,#e799ff 109px,#ff93fb 121px,#ff56b3 164px,#ff1a84 205px,#ff007b 214px,#ff0076 219px)"></i>
<i style="top:290px;left:27px;width:215px;background:linear-gradient(90deg,#00abff 0px,#00a3ff 52px,#2ea3ff 55px,#62a1ff 63px,#ad9cff 85px,#ff8ffc 120px,#ff52b4 163px,#ff1989 200px,#ff0081 208px,#ff007b 214px)"></i>
<i style="top:292px;left:28px;width:210px;background:linear-gradient(90deg,#00a9ff 0px,#00a1ff 51px,#26a0ff 53px,#549fff 59px,#999bff 77px,#ff8bfc 119px,#ff4eb5 162px,#ff168e 196px,#ff0086 203px,#ff0080 209px)"></i>
<i style="top:294px;left:28px;width:205px;background:linear-gradient(90deg,#00a7ff 0px,#019eff 51px,#1b9eff 52px,#439dff 56px,#7f9aff 69px,#e38eff 106px,#ff86fb 120px,#ff47b3 164px,#ff1593 192px,#ff008d 198px,#ff0086 204px)"></i>
<i style="top:296px;left:29px;width:200px;background:linear-gradient(90deg,#00a4ff 0px,#009cff 49px,#2c9bff 52px,#5b99ff 59px,#a294ff 79px,#ff82fc 119px,#ff42b4 163px,#ff1498 187px,#ff0092 193px,#ff008c 199px)"></i>
<i style="top:298px;left:30px;width:195px;background:linear-gradient(90deg,#00a2ff 0px,#0099ff 48px,#2f98ff 51px,#6196ff 59px,#ad8fff 82px,#ff7cfa 119px,#ff39b2 164px,#ff0f9c 183px,#ff0098 187px,#ff0091 194px)"></i>
<i style="top:300px;left:30px;width:190px;background:linear-gradient(90deg,#00a0ff 0px,#0096ff 48px,#1996ff 49px,#4195ff 53px,#7d91ff 66px,#dd83ff 102px,#ff78fb 119px,#ff33b3 164px,#ff0ea2 179px,#ff009d 183px,#ff0097 189px)"></i>
<i style="top:302px;left:31px;width:185px;background:linear-gradient(90deg,#009dff 0px,#0093ff 46px,#0893ff 47px,#2b93ff 49px,#5a91ff 56px,#9f8aff 76px,#ff74fc 118px,#ff29b3 164px,#ff07a6 175px,#ff009f 181px,#ff009c 184px)"></i>
<i style="top:304px;left:32px;width:180px;background:linear-gradient(90deg,#009bff 0px,#0091ff 45px,#2e90ff 48px,#5f8dff 56px,#aa85ff 79px,#ff70fc 117px,#ff20b4 163px,#ff00a9 172px,#ff00a1 179px)"></i>
<i style="top:306px;left:32px;width:175px;background:linear-gradient(90deg,#0099ff 0px,#008eff 45px,#268dff 47px,#528bff 53px,#9485ff 71px,#ff6bfd 117px,#ff1db8 160px,#ff00af 168px,#ff00a8 174px)"></i>
<i style="top:308px;left:33px;width:170px;background:linear-gradient(90deg,#0096ff 0px,#048bff 44px,#1c8bff 45px,#4889ff 50px,#8684ff 65px,#ef6dff 108px,#ff61f7 119px,#ff1cbe 155px,#ff00b5 162px,#ff00ad 169px)"></i>
<i style="top:310px;left:34px;width:165px;background:linear-gradient(90deg,#0094ff 0px,#0088ff 42px,#2c87ff 45px,#5e85ff 53px,#a87bff 76px,#ff5ffc 116px,#ff1bc4 150px,#ff00bb 157px,#ff00b3 164px)"></i>
<i style="top:312px;left:34px;width:161px;background:linear-gradient(90deg,#0091ff 0px,#0085ff 42px,#2485ff 44px,#5083ff 50px,#927bff 68px,#ff5cff 115px,#ff1bcb 146px,#ff00c3 152px,#ff00b8 160px)"></i>
<i style="top:314px;left:35px;width:155px;background:linear-gradient(90deg,#008fff 0px,#0182ff 41px,#1a82ff 42px,#4081ff 46px,#7a7bff 59px,#d866ff 96px,#ff50f9 117px,#ff1ad1 141px,#ff00c9 147px,#ff00bf 154px)"></i>
<i style="top:316px;left:36px;width:150px;background:linear-gradient(90deg,#008cff 0px,#0080ff 39px,#347eff 43px,#697aff 53px,#b96bff 81px,#ff4afa 116px,#ff15d6 137px,#ff00d0 141px,#ff00c5 149px)"></i>
<i style="top:318px;left:37px;width:145px;background:linear-gradient(90deg,#0089ff 0px,#007dff 38px,#2d7cff 41px,#5d78ff 49px,#a56cff 72px,#ff45fd 114px,#ff13dd 132px,#ff00d7 136px,#ff00cc 144px)"></i>
<i style="top:320px;left:37px;width:140px;background:linear-gradient(90deg,#0087ff 0px,#007aff 38px,#1879ff 39px,#3f78ff 43px,#7871ff 56px,#d359ff 92px,#ff3afb 115px,#ff12e4 128px,#ff00df 131px,#ff00d3 139px)"></i>
<i style="top:322px;left:38px;width:135px;background:linear-gradient(90deg,#0084ff 0px,#0077ff 36px,#0877ff 37px,#2976ff 39px,#5672ff 46px,#9b67ff 67px,#f63dff 108px,#ff22f3 119px,#ff00e6 126px,#ff00da 134px)"></i>
<i style="top:324px;left:39px;width:130px;background:linear-gradient(90deg,#0081ff 0px,#0074ff 35px,#2c72ff 38px,#5b6fff 46px,#a360ff 69px,#f138ff 105px,#ff19f7 116px,#ff00ee 121px,#ff00e1 129px)"></i>
<i style="top:326px;left:40px;width:124px;background:linear-gradient(90deg,#007eff 0px,#0071ff 34px,#2470ff 36px,#536cff 43px,#9660ff 63px,#e936ff 100px,#ff18ff 111px,#ff00f8 115px,#ff00ea 123px)"></i>
<i style="top:328px;left:40px;width:120px;background:linear-gradient(90deg,#007cff 0px,#056dff 34px,#1b6dff 35px,#456aff 40px,#8360ff 56px,#de37ff 95px,#f615ff 107px,#fc00ff 110px,#ff00f1 119px)"></i>
<i style="top:330px;left:41px;width:115px;background:linear-gradient(90deg,#0079ff 0px,#006aff 32px,#2a69ff 35px,#5a64ff 43px,#a153ff 66px,#e02bff 95px,#f00cff 103px,#f600ff 106px,#ff00f9 114px)"></i>
<i style="top:332px;left:42px;width:110px;background:linear-gradient(90deg,#0075ff 0px,#0067ff 31px,#2366ff 33px,#4d62ff 39px,#8c55ff 57px,#d42eff 88px,#e610ff 97px,#ea00ff 99px,#fd00ff 109px)"></i>
<i style="top:334px;left:43px;width:104px;background:linear-gradient(90deg,#0072ff 0px,#0263ff 30px,#1963ff 31px,#3e60ff 35px,#7857ff 49px,#c92eff 82px,#dd0dff 92px,#e300ff 95px,#f300ff 103px)"></i>
<i style="top:336px;left:44px;width:99px;background:linear-gradient(90deg,#006fff 0px,#0060ff 28px,#325eff 32px,#6557ff 42px,#b139ff 70px,#d115ff 85px,#d900ff 89px,#eb00ff 98px)"></i>
<i style="top:338px;left:45px;width:94px;background:linear-gradient(90deg,#006bff 0px,#005dff 27px,#2b5bff 30px,#5e54ff 39px,#a639ff 64px,#c717ff 79px,#d100ff 84px,#e200ff 93px)"></i>
<i style="top:340px;left:46px;width:88px;background:linear-gradient(90deg,#0068ff 0px,#0059ff 26px,#1758ff 27px,#3c55ff 31px,#744aff 44px,#b623ff 70px,#c20aff 76px,#c800ff 79px,#d800ff 87px)"></i>
<i style="top:342px;left:47px;width:83px;background:linear-gradient(90deg,#0064ff 0px,#0055ff 24px,#0855ff 25px,#2753ff 27px,#574dff 35px,#9d30ff 58px,#b80dff 70px,#be00ff 73px,#d000ff 82px)"></i>
<i style="top:344px;left:48px;width:78px;background:linear-gradient(90deg,#0060ff 0px,#0051ff 23px,#2a4fff 26px,#5c47ff 35px,#a41fff 60px,#b500ff 68px,#c800ff 77px)"></i>
<i style="top:346px;left:49px;width:72px;background:linear-gradient(90deg,#005cff 0px,#004dff 22px,#234bff 24px,#5044ff 31px,#9325ff 52px,#a607ff 60px,#ad00ff 63px,#be00ff 71px)"></i>
<i style="top:348px;left:50px;width:67px;background:linear-gradient(90deg,#0058ff 0px,#0548ff 21px,#2646ff 23px,#563eff 31px,#9319ff 51px,#a200ff 57px,#b500ff 66px)"></i>
<i style="top:350px;left:51px;width:62px;background:linear-gradient(90deg,#0054ff 0px,#0044ff 19px,#2941ff 22px,#5738ff 30px,#8c13ff 47px,#9600ff 51px,#ad00ff 61px)"></i>
<i style="top:352px;left:53px;width:56px;background:linear-gradient(90deg,#004eff 0px,#003fff 17px,#213dff 19px,#4f34ff 26px,#8211ff 41px,#8c00ff 45px,#a400ff 55px)"></i>
<i style="top:354px;left:54px;width:50px;background:linear-gradient(90deg,#0049ff 0px,#0239ff 16px,#1838ff 17px,#4131ff 22px,#770eff 36px,#8000ff 39px,#9900ff 49px)"></i>
<i style="top:356px;left:56px;width:44px;background:linear-gradient(90deg,#0043ff 0px,#0034ff 13px,#302eff 17px,#6118ff 27px,#7500ff 33px,#8f00ff 43px)"></i>
<i style="top:358px;left:58px;width:38px;background:linear-gradient(90deg,#003cff 0px,#002dff 11px,#2a28ff 14px,#5a0fff 23px,#6900ff 27px,#8600ff 37px)"></i>
<i style="top:360px;left:60px;width:31px;background:linear-gradient(90deg,#0033ff 0px,#0025ff 9px,#1722ff 10px,#3a18ff 14px,#5700ff 20px,#7800ff 30px)"></i>
<i style="top:362px;left:62px;width:25px;background:linear-gradient(90deg,#0029ff 0px,#001cff 6px,#081aff 7px,#2613ff 9px,#4700ff 14px,#6d00ff 24px)"></i>
<i style="top:364px;left:64px;width:19px;background:linear-gradient(90deg,#001bff 0px,#000dff 4px,#2900ff 7px,#5900ff 16px,#6000ff 18px)"></i>
<i style="top:366px;left:66px;width:12px;background:linear-gradient(90deg,#0000ff 0px,#0000ff 2px,#2200ff 4px,#4e00ff 11px)"></i>
</div></div>
<div class="a" style="left:110px;top:161px;width:1px;height:368px;background:rgba(128,128,128,0.26)"></div>
<div class="a" style="left:152px;top:161px;width:1px;height:368px;background:rgba(128,128,128,0.26)"></div>
<div class="a" style="left:192px;top:161px;width:1px;height:368px;background:rgba(128,128,128,0.26)"></div>
<div class="a" style="left:233px;top:161px;width:1px;height:368px;background:rgba(128,128,128,0.26)"></div>
<div class="a" style="left:275px;top:161px;width:1px;height:368px;background:rgba(128,128,128,0.26)"></div>
<div class="a" style="left:315px;top:161px;width:1px;height:368px;background:rgba(128,128,128,0.26)"></div>
<div class="a" style="left:356px;top:161px;width:1px;height:368px;background:rgba(128,128,128,0.26)"></div>
<div class="a" style="left:397px;top:161px;width:1px;height:368px;background:rgba(128,128,128,0.26)"></div>
<div class="a" style="left:72px;top:489px;width:360px;height:1px;background:rgba(128,128,128,0.26)"></div>
<div class="a" style="left:72px;top:448px;width:360px;height:1px;background:rgba(128,128,128,0.26)"></div>
<div class="a" style="left:72px;top:407px;width:360px;height:1px;background:rgba(128,128,128,0.26)"></div>
<div class="a" style="left:72px;top:366px;width:360px;height:1px;background:rgba(128,128,128,0.26)"></div>
<div class="a" style="left:72px;top:325px;width:360px;height:1px;background:rgba(128,128,128,0.26)"></div>
<div class="a" style="left:72px;top:284px;width:360px;height:1px;background:rgba(128,128,128,0.26)"></div>
<div class="a" style="left:72px;top:244px;width:360px;height:1px;background:rgba(128,128,128,0.26)"></div>
<div class="a" style="left:72px;top:202px;width:360px;height:1px;background:rgba(128,128,128,0.26)"></div>
<div class="a" style="left:70px;top:161px;width:362px;height:1px;background:#b8b8b8"></div>
<div class="a" style="left:70px;top:161px;width:2px;height:370px;background:#707070"></div>
<div class="a" style="left:70px;top:529px;width:362px;height:2px;background:#707070"></div>
<svg class="a" style="left:0;top:0" width="900" height="721"><polygon points="196.7,285.7 325.7,392.3 135.3,495.6" fill="none" stroke="#f9a222" stroke-width="1.45"/><polygon points="132.5,196.8 308.7,370.1 122.8,502.2" fill="none" stroke="#000" stroke-width="1" shape-rendering="crispEdges"/><polygon points="132.5,196.8 308.7,370.1 122.8,502.2" fill="none" stroke="rgba(0,0,0,0.25)" stroke-width="1.5"/></svg>
<div class="t" style="left:74px;top:164px;font-size:11.5px;font-weight:bold;color:#474747">y</div>
<div class="t" style="left:74px;top:197px;font-size:11.5px;font-weight:bold;color:#474747">0.8</div>
<div class="t" style="left:74px;top:279px;font-size:11.5px;font-weight:bold;color:#474747">0.6</div>
<div class="t" style="left:74px;top:361px;font-size:11.5px;font-weight:bold;color:#474747">0.4</div>
<div class="t" style="left:74px;top:442px;font-size:11.5px;font-weight:bold;color:#474747">0.2</div>
<div class="t" style="left:74px;top:517px;font-size:11.5px;font-weight:bold;color:#474747">0</div>
<div class="t" style="left:144px;top:517px;font-size:11.5px;font-weight:bold;color:#474747">0.2</div>
<div class="t" style="left:226px;top:517px;font-size:11.5px;font-weight:bold;color:#474747">0.4</div>
<div class="t" style="left:307px;top:517px;font-size:11.5px;font-weight:bold;color:#474747">0.6</div>
<div class="t" style="left:389px;top:517px;font-size:11.5px;font-weight:bold;color:#474747">0.8</div>
<div class="a" style="left:428px;top:518px;width:4px;height:12px;overflow:hidden"><div class="t" style="left:0;top:0;font-size:11.5px;font-weight:bold;color:#474747">x</div></div>
<div class="t" style="left:312px;top:233px;font-size:19px;font-weight:bold;color:#000">Monitor</div>
<div class="t" style="left:312px;top:257px;font-size:19px;font-weight:bold;color:#f0a020">sRGB</div>
<div class="a" style="left:465px;top:161px;width:370px;height:370px;border:2px solid #1a1a0a;background:linear-gradient(180deg,#e04a10 0px,#e24c10 8px,#ec6c14 42px,#eb9014 73px,#eaa814 87px,#ecc014 104px,#ecdc12 127px,#e6e614 146px,#dcec14 172px,#b4d812 207px,#90bc10 247px,#52a00e 312px,#3a900c 357px,#389010 366px)"></div>
<div class="a" style="left:467px;top:235px;width:366px;height:1.5px;background:rgba(0,0,0,0.065)"></div>
<div class="a" style="left:467px;top:308.5px;width:366px;height:1.5px;background:rgba(0,0,0,0.065)"></div>
<div class="a" style="left:467px;top:381px;width:366px;height:1.5px;background:rgba(0,0,0,0.065)"></div>
<div class="a" style="left:467px;top:454.5px;width:366px;height:1.5px;background:rgba(0,0,0,0.065)"></div>
<div class="t" style="left:468px;top:164px;font-size:10.6px;font-weight:bold;letter-spacing:0.25px;color:rgba(0,0,0,0.68)">10 d E 94</div>
<div class="t" style="left:468px;top:231px;font-size:10.6px;font-weight:bold;letter-spacing:0.25px;color:rgba(0,0,0,0.68)">8 d E 94</div>
<div class="t" style="left:468px;top:304px;font-size:10.6px;font-weight:bold;letter-spacing:0.25px;color:rgba(0,0,0,0.68)">6 d E 94</div>
<div class="t" style="left:468px;top:376px;font-size:10.6px;font-weight:bold;letter-spacing:0.25px;color:rgba(0,0,0,0.68)">4 d E 94</div>
<div class="t" style="left:468px;top:449px;font-size:10.6px;font-weight:bold;letter-spacing:0.25px;color:rgba(0,0,0,0.68)">2 d E 94</div>
<svg class="a" style="left:0;top:0" width="900" height="721"><rect x="530.80" y="438.70" width="12.8" height="91.30" fill="#343434" stroke="#0c1400" stroke-width="1.9"/><rect x="548.15" y="473.20" width="12.8" height="56.80" fill="#454545" stroke="#0c1400" stroke-width="1.9"/><rect x="565.50" y="450.40" width="12.8" height="79.60" fill="#8a8a8a" stroke="#0c1400" stroke-width="1.9"/><rect x="582.85" y="454.70" width="12.8" height="75.30" fill="#c8c8c8" stroke="#0c1400" stroke-width="1.9"/><rect x="617.55" y="358.70" width="12.8" height="171.30" fill="#ff0000" stroke="#0c1400" stroke-width="1.9"/><rect x="634.90" y="199.50" width="12.8" height="330.50" fill="#00ff00" stroke="#0c1400" stroke-width="1.9"/><rect x="652.25" y="417.50" width="12.8" height="112.50" fill="#0000ff" stroke="#0c1400" stroke-width="1.9"/><rect x="669.60" y="495.50" width="12.8" height="34.50" fill="#00ffff" stroke="#0c1400" stroke-width="1.9"/><rect x="686.95" y="424.50" width="12.8" height="105.50" fill="#ff00ff" stroke="#0c1400" stroke-width="1.9"/><rect x="704.30" y="296.50" width="12.8" height="233.50" fill="#ffff00" stroke="#0c1400" stroke-width="1.9"/><rect x="721.65" y="188.00" width="12.8" height="342.00" fill="#b25a60" stroke="#0c1400" stroke-width="1.9"/><rect x="739.00" y="339.40" width="12.8" height="190.60" fill="#55a865" stroke="#0c1400" stroke-width="1.9"/><rect x="756.35" y="447.50" width="12.8" height="82.50" fill="#5a5ab4" stroke="#0c1400" stroke-width="1.9"/><rect x="773.70" y="439.00" width="12.8" height="91.00" fill="#55aab4" stroke="#0c1400" stroke-width="1.9"/><rect x="791.05" y="457.80" width="12.8" height="72.20" fill="#b45ab4" stroke="#0c1400" stroke-width="1.9"/><rect x="808.40" y="288.80" width="12.8" height="241.20" fill="#aaaa5c" stroke="#0c1400" stroke-width="1.9"/></svg>
<div class="t" style="left:160px;top:549px;font-size:17.5px;color:#1a1a1a">Target</div>
<div class="t" style="left:252px;top:549px;font-size:17.5px;color:#1a1a1a">Current</div>
<div class="t" style="left:345px;top:549px;font-size:17.5px;color:#1a1a1a">Deviation</div>
<div class="t" style="left:68px;top:571px;font-size:17.5px;color:#1a1a1a">Gamma</div>
<div class="t" style="left:160px;top:571px;font-size:17.5px;color:#1a1a1a">2.2</div>
<div class="t" style="left:252px;top:571px;font-size:17.5px;color:#f0843c">2.4</div>
<div class="t" style="left:345px;top:571px;font-size:17.5px;color:#f0843c">7%</div>
<div class="t" style="left:68px;top:593px;font-size:17.5px;color:#1a1a1a">Kelvin</div>
<div class="t" style="left:160px;top:593px;font-size:17.5px;color:#1a1a1a">6500</div>
<div class="t" style="left:252px;top:593px;font-size:17.5px;color:#f0843c">8509</div>
<div class="t" style="left:345px;top:593px;font-size:17.5px;color:#f0843c">31%</div>
<div class="t" style="left:68px;top:614px;font-size:17.5px;color:#1a1a1a">cd/m2</div>
<div class="t" style="left:160px;top:614px;font-size:17.5px;color:#1a1a1a">120</div>
<div class="t" style="left:252px;top:614px;font-size:17.5px;color:#f0843c">153</div>
<div class="t" style="left:345px;top:614px;font-size:17.5px;color:#f0843c">28%</div>
<div class="t" style="left:466px;top:549px;font-size:17.5px;color:#1a1a1a;letter-spacing:-0.2px">Delta E Average</div>
<div class="t" style="left:466px;top:571px;font-size:17.5px;color:#1a1a1a">Delta E Maximum</div>
<div class="t" style="left:628px;top:549px;font-size:17.5px;color:#f0843c">3.5</div>
<div class="t" style="left:628px;top:571px;font-size:17.5px;color:#f0843c">9.3</div>
<div class="btn" style="left:28px;top:671px;width:105px;height:30px;border:2px solid #5597d8"></div>
<div class="t" style="left:43px;top:679px;font-size:15px;color:#1a1a1a">Main Menu</div>
<div class="btn" style="left:151px;top:672px;width:104px;height:29px"></div>
<div class="t" style="left:166px;top:679px;font-size:15px;color:#1a1a1a">Calibration</div>
<div class="btn" style="left:646px;top:672px;width:104px;height:29px"></div>
<div class="t" style="left:680px;top:679px;font-size:15px;color:#1a1a1a">Save</div>
<div class="btn" style="left:769px;top:672px;width:104px;height:29px"></div>
<div class="t" style="left:806px;top:679px;font-size:15px;color:#1a1a1a">Quit</div>
</body></html>
